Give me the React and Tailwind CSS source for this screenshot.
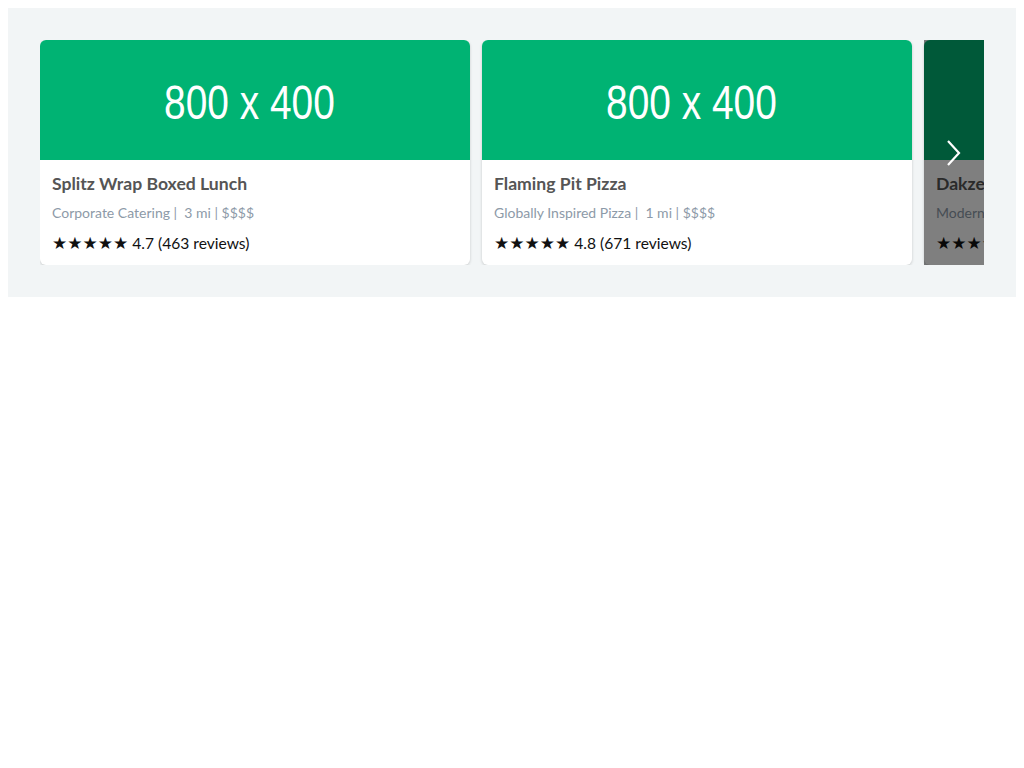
const restaurants = [
  {
    name: "Splitz Wrap Boxed Lunch",
    cuisine: "Corporate Catering",
    distance: "3 mi",
    rating: "4.7",
    reviews: 463,
  },
  {
    name: "Flaming Pit Pizza",
    cuisine: "Globally Inspired Pizza",
    distance: "1 mi",
    rating: "4.8",
    reviews: 671,
  },
  {
    name: "Dakzen Thai",
    cuisine: "Modern Thai Street Food",
    distance: "2 mi",
    rating: "4.6",
    reviews: 512,
  },
];

function RestaurantCard({ item }) {
  return (
    <div className="w-[430px] shrink-0 overflow-hidden rounded-md bg-white shadow-[0_1px_3px_rgba(0,0,0,0.18)]">
      <div className="flex h-[120px] items-center justify-center bg-[#00b373] pt-[5px] pr-[12px]">
        <span className="inline-block scale-x-[0.81] text-[48px] leading-none text-white [font-family:'Liberation_Sans',Arial,sans-serif]">
          800 x 400
        </span>
      </div>
      <div className="px-3 pt-[13px] pb-[12px]">
        <h3 className="text-[17.6px] font-bold leading-[22px] text-[#555]">{item.name}</h3>
        <p className="mt-[9px] text-[14px] leading-[18px] text-[#8d9aa8]">
          {item.cuisine} |&nbsp; {item.distance} | $$$$
        </p>
        <p className="mt-[11px] text-[15.6px] leading-[20px] text-[#111]">
          <span className="text-[17px] [font-family:'DejaVu_Sans',sans-serif]">★★★★★</span> {item.rating} ({item.reviews} reviews)
        </p>
      </div>
    </div>
  );
}

export default function App() {
  return (
    <div className="p-2 [font-family:Lato,'Liberation_Sans',sans-serif]">
      <div className="bg-[#f2f5f6] p-8">
        <div className="relative overflow-hidden">
          <div className="flex gap-3">
            {restaurants.map((item) => (
              <RestaurantCard key={item.name} item={item} />
            ))}
          </div>
          <div className="absolute top-0 right-0 bottom-0 flex w-[60px] items-center pl-[20px] bg-black/50">
            <svg width="18" height="28" viewBox="0 0 18 28" fill="none">
              <path d="M4 2 L15 14 L4 26" stroke="white" strokeWidth="2.2" />
            </svg>
          </div>
        </div>
      </div>
    </div>
  );
}
